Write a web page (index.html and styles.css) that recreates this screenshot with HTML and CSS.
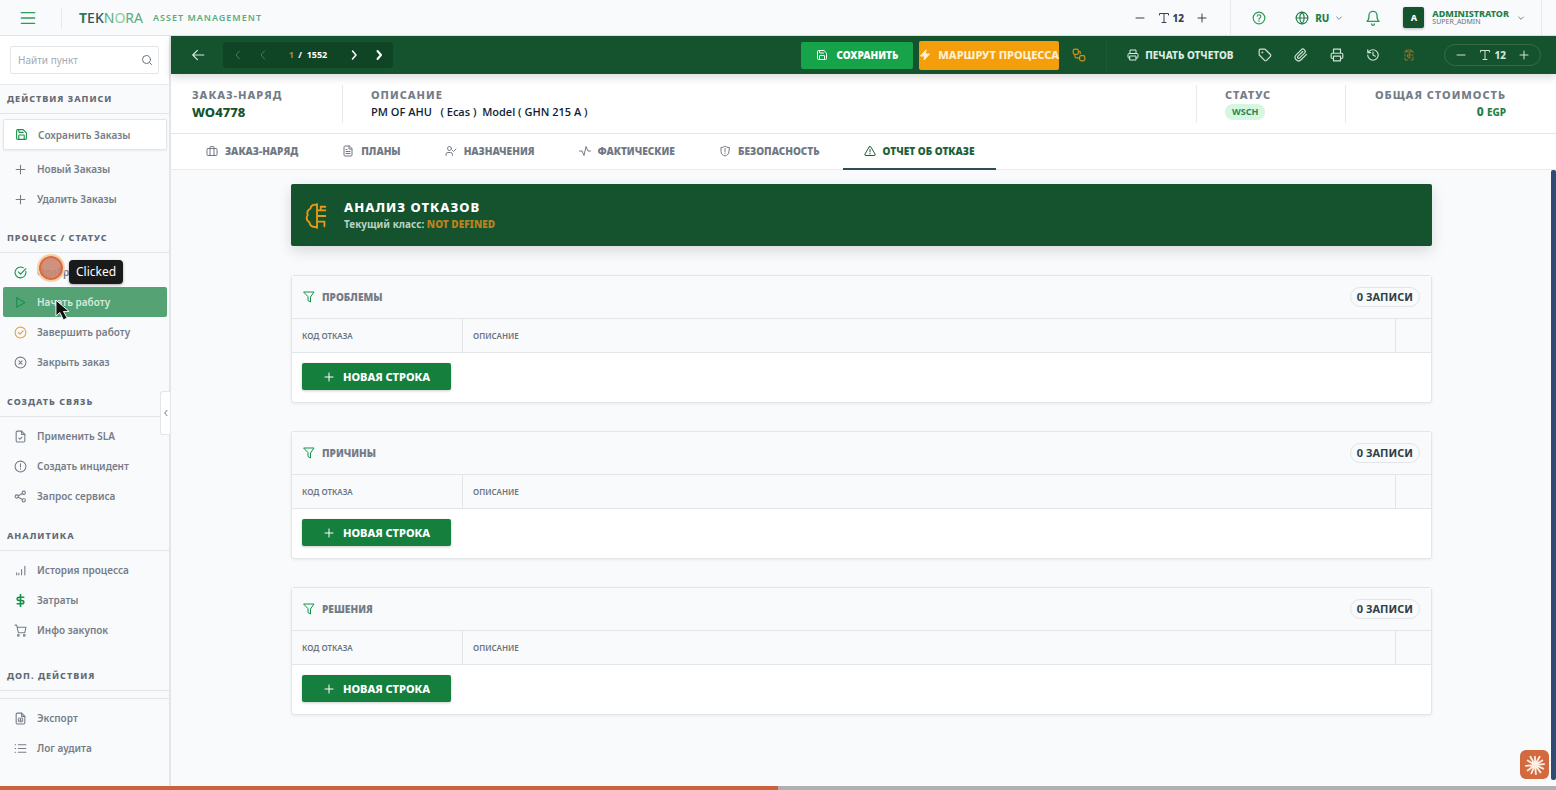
FILE: index.html
```html
<!DOCTYPE html>
<html lang="ru">
<head>
<meta charset="utf-8">
<meta name="viewport" content="width=device-width, initial-scale=1">
<title>TEKNORA Asset Management</title>
<link rel="stylesheet" href="styles.css">
</head>
<body>
<svg class="sprite" aria-hidden="true">
  <symbol id="i-menu" viewBox="0 0 24 24"><path d="M2 4h20M2 12h20M2 20h20"/></symbol>
  <symbol id="i-search" viewBox="0 0 24 24"><circle cx="11" cy="11" r="8"/><path d="m21 21-4-4"/></symbol>
  <symbol id="i-save" viewBox="0 0 24 24"><path d="M15 3H5a2 2 0 0 0-2 2v14a2 2 0 0 0 2 2h14a2 2 0 0 0 2-2V9z"/><path d="M17 21v-7a1 1 0 0 0-1-1H8a1 1 0 0 0-1 1v7M7 3v4a1 1 0 0 0 1 1h7"/></symbol>
  <symbol id="i-plus" viewBox="0 0 24 24"><path d="M4 12h16M12 4v16"/></symbol>
  <symbol id="i-minus" viewBox="0 0 24 24"><path d="M4 12h16"/></symbol>
  <symbol id="i-check" viewBox="0 0 24 24"><path d="M21.800 10A10 10 0 1 1 17 3.300"/><path d="m8 11 4 4L22 5"/></symbol>
  <symbol id="i-play" viewBox="0 0 24 24"><path d="m5 3 15 9-15 9z"/></symbol>
  <symbol id="i-done" viewBox="0 0 24 24"><circle cx="12" cy="12" r="10"/><path d="m8 12 3 3 6-6"/></symbol>
  <symbol id="i-close" viewBox="0 0 24 24"><circle cx="12" cy="12" r="10"/><path d="m15 9-6 6M9 9l6 6"/></symbol>
  <symbol id="i-filecheck" viewBox="0 0 24 24"><path d="M14 2H6a2 2 0 0 0-2 2v16a2 2 0 0 0 2 2h12a2 2 0 0 0 2-2V8z"/><path d="M14 2v6h6M9 15l2 2 4-4"/></symbol>
  <symbol id="i-alert" viewBox="0 0 24 24"><circle cx="12" cy="12" r="10"/><path d="M12 7v6M12 16v1"/></symbol>
  <symbol id="i-share" viewBox="0 0 24 24"><circle cx="18" cy="5" r="3"/><circle cx="5" cy="12" r="3"/><circle cx="18" cy="19" r="3"/><path d="m8 13.500 7.400 4M15.400 6.500 8 10.500"/></symbol>
  <symbol id="i-bars" viewBox="0 0 24 24"><path d="M5 20v-4M9 20v-3M14 20V10M20 20V4"/></symbol>
  <symbol id="i-dollar" viewBox="0 0 24 24"><path stroke-width="3" d="M12 1v22M18 6H9.500a3.500 3 0 0 0 0 6h5a3.500 3 0 0 1 0 6H6"/></symbol>
  <symbol id="i-cart" viewBox="0 0 24 24"><circle cx="8" cy="21" r="1.500"/><circle cx="19" cy="21" r="1.500"/><path d="M2 2h3l3 14h12l2-10H6"/></symbol>
  <symbol id="i-sheet" viewBox="0 0 24 24"><path d="M14 2H6a2 2 0 0 0-2 2v16a2 2 0 0 0 2 2h12a2 2 0 0 0 2-2V8z"/><path d="M14 2v6h6"/><path stroke-width="1.500" d="M8 12v6h8v-6zM12 12v6M8 15h8"/></symbol>
  <symbol id="i-list" viewBox="0 0 24 24"><path d="M8 5h14M8 12h14M8 19h14M2 5h1M2 12h1M2 19h1"/></symbol>
  <symbol id="i-type" viewBox="0 0 24 24"><path d="M3 6V3h18v3M12 3v18M8 21h8"/></symbol>
  <symbol id="i-help" viewBox="0 0 24 24"><circle cx="12" cy="12" r="10"/><path d="M9 9a3 3 0 0 1 6 1c0 2-3 2-3 4M12 17v1"/></symbol>
  <symbol id="i-globe" viewBox="0 0 24 24"><circle cx="12" cy="12" r="10"/><path d="M2 12h20M12 2a15 15 0 0 1 0 20a15 15 0 0 1 0-20"/></symbol>
  <symbol id="i-bell" viewBox="0 0 24 24"><path d="M6 8a6 6 0 0 1 12 0c0 7 3 9 3 9H3s3-2 3-9M10 21a2 2 0 0 0 4 0"/></symbol>
  <symbol id="i-down" viewBox="0 0 24 24"><path d="m5 9 7 7 7-7"/></symbol>
  <symbol id="i-left" viewBox="0 0 24 24"><path d="m15 4-7 8 7 8"/></symbol>
  <symbol id="i-right" viewBox="0 0 24 24"><path d="m9 4 7 8-7 8"/></symbol>
  <symbol id="i-back" viewBox="0 0 24 24"><path d="m11 4-8 8 8 8M3 12h19"/></symbol>
  <symbol id="i-bolt" viewBox="0 0 24 24"><path fill="currentColor" d="M14 2 3 14h8l-1 8 11-12h-8z"/></symbol>
  <symbol id="i-flow" viewBox="0 0 24 24"><rect x="2" y="2" width="9" height="9" rx="3"/><rect x="13" y="13" width="9" height="9" rx="3"/><path d="M5 11v3a3 3 0 0 0 3 3h5M11 6h3v4"/></symbol>
  <symbol id="i-print" viewBox="0 0 24 24"><path d="M6 18H4a2 2 0 0 1-2-2v-5a2 2 0 0 1 2-2h16a2 2 0 0 1 2 2v5a2 2 0 0 1-2 2h-2M6 9V2h12v7M6 14h12v8H6z"/></symbol>
  <symbol id="i-tag" viewBox="0 0 24 24"><path d="M12.600 2.600A2 2 0 0 0 11 2H4a2 2 0 0 0-2 2v7a2 2 0 0 0 .6 1.400l8.700 8.700a2.400 2.400 0 0 0 3.400 0l6.600-6.600a2.400 2.400 0 0 0 0-3.400z"/><circle cx="7.500" cy="7.500" r=".6"/></symbol>
  <symbol id="i-clip" viewBox="0 0 24 24"><path d="m21.400 11-9.200 9.200a6 6 0 0 1-8.500-8.500l8.600-8.600a4 4 0 1 1 5.700 5.700l-8.600 8.500a2 2 0 0 1-2.800-2.800l8.500-8.500"/></symbol>
  <symbol id="i-history" viewBox="0 0 24 24"><path d="M3 12a9 9 0 1 0 9-9 9.700 9.700 0 0 0-6.700 2.700L3 8M3 3v5h5M12 7v5l4 2"/></symbol>
  <symbol id="i-board" viewBox="0 0 24 24"><path d="M8 4H4v3M16 4h4v3M8 2h8v4H8zM4 11v3M4 18v4h5M20 16v6h-4M20 12H9M13 8v4M9 12v4h6M12 16v3"/></symbol>
  <symbol id="i-case" viewBox="0 0 24 24"><rect x="2" y="7" width="20" height="14" rx="2"/><path d="M8 21V5a2 2 0 0 1 2-2h4a2 2 0 0 1 2 2v16"/></symbol>
  <symbol id="i-file" viewBox="0 0 24 24"><path d="M14 2H6a2 2 0 0 0-2 2v16a2 2 0 0 0 2 2h12a2 2 0 0 0 2-2V8z"/><path d="M14 2v6h6M8 13h8M8 17h8M8 9h2"/></symbol>
  <symbol id="i-user" viewBox="0 0 24 24"><circle cx="9" cy="7" r="4"/><path d="M2 21v-2a4 4 0 0 1 4-4h5a4 4 0 0 1 4 4v2M15 11l2 2 5-5"/></symbol>
  <symbol id="i-pulse" viewBox="0 0 24 24"><path d="M1 12h5l4 9 4-18 4 9h5"/></symbol>
  <symbol id="i-shield" viewBox="0 0 24 24"><path d="M20 13c0 5-3.500 7.500-8 9-4.500-1.500-8-4-8-9V5c3 0 6-1 8-3 2 2 5 3 8 3zM12 7v6M12 16v1"/></symbol>
  <symbol id="i-warn" viewBox="0 0 24 24"><path d="M10.300 3.900 2 18a2 2 0 0 0 1.700 3h16.600a2 2 0 0 0 1.700-3L13.700 3.900a2 2 0 0 0-3.400 0zM12 9v5M12 17v1"/></symbol>
  <symbol id="i-filter" viewBox="0 0 24 24"><path d="M2 2h20l-7 10v10l-5-3v-7z"/></symbol>
  <symbol id="i-brain" viewBox="0 0 24 28"><path d="M12 1v26M12 3C9 0 5 3 5 6 2 7 1 10 2 13c-2 3-1 6 2 8 0 4 5 6 8 4M12 14h9M12 8h4V4h5M16 8h5M12 20h8v5"/></symbol>
</svg>

<div class="app">
  <header class="topbar">
    <button class="icon-btn menu" aria-label="Меню"><svg class="ic ic16"><use href="#i-menu"/></svg></button>
    <a class="brand" href="#">
      <span class="logo"><span class="logo-t">T</span><span class="logo-ek">EK</span><span class="logo-n">N</span><span class="logo-o">O</span><span class="logo-ra">RA</span></span>
      <span class="tagline">ASSET MANAGEMENT</span>
    </a>
    <div class="top-size">
      <button class="icon-btn" aria-label="Меньше"><svg class="ic ic12"><use href="#i-minus"/></svg></button>
      <span class="size-value"><svg class="ic ic12"><use href="#i-type"/></svg>12</span>
      <button class="icon-btn" aria-label="Больше"><svg class="ic ic12"><use href="#i-plus"/></svg></button>
    </div>
    <div class="top-tools">
      <button class="icon-btn green" aria-label="Помощь"><svg class="ic ic14"><use href="#i-help"/></svg></button>
      <button class="lang"><svg class="ic ic14"><use href="#i-globe"/></svg>RU<svg class="ic ic8 muted"><use href="#i-down"/></svg></button>
      <button class="icon-btn bell green" aria-label="Уведомления"><svg class="ic ic16"><use href="#i-bell"/></svg></button>
      <button class="user">
        <span class="avatar">A</span>
        <span class="user-text"><span class="user-name">ADMINISTRATOR</span><span class="user-role">SUPER_ADMIN</span></span>
        <svg class="ic ic8 muted"><use href="#i-down"/></svg>
      </button>
    </div>
  </header>

  <div class="body">
    <aside class="sidebar">
      <div class="search">
        <label class="search-box"><input type="text" placeholder="Найти пункт" aria-label="Найти пункт"><svg class="ic ic12"><use href="#i-search"/></svg></label>
      </div>
      <nav class="side-nav">
        <h2 class="side-title">ДЕЙСТВИЯ ЗАПИСИ</h2>
        <div class="side-group lead">
          <button class="side-item card"><svg class="ic c-green"><use href="#i-save"/></svg>Сохранить Заказы</button>
          <button class="side-item"><svg class="ic"><use href="#i-plus"/></svg>Новый Заказы</button>
          <button class="side-item"><svg class="ic"><use href="#i-plus"/></svg>Удалить Заказы</button>
        </div>
        <h2 class="side-title">ПРОЦЕСС / СТАТУС</h2>
        <div class="side-group">
          <button class="side-item"><svg class="ic c-green"><use href="#i-check"/></svg>Одобрить</button>
          <button class="side-item active"><svg class="ic c-green"><use href="#i-play"/></svg>Начать работу</button>
          <button class="side-item"><svg class="ic c-amber"><use href="#i-done"/></svg>Завершить работу</button>
          <button class="side-item"><svg class="ic"><use href="#i-close"/></svg>Закрыть заказ</button>
        </div>
        <h2 class="side-title">СОЗДАТЬ СВЯЗЬ</h2>
        <div class="side-group">
          <button class="side-item"><svg class="ic"><use href="#i-filecheck"/></svg>Применить SLA</button>
          <button class="side-item"><svg class="ic"><use href="#i-alert"/></svg>Создать инцидент</button>
          <button class="side-item"><svg class="ic"><use href="#i-share"/></svg>Запрос сервиса</button>
        </div>
        <h2 class="side-title">АНАЛИТИКА</h2>
        <div class="side-group wide">
          <button class="side-item"><svg class="ic"><use href="#i-bars"/></svg>История процесса</button>
          <button class="side-item"><svg class="ic c-green"><use href="#i-dollar"/></svg>Затраты</button>
          <button class="side-item"><svg class="ic"><use href="#i-cart"/></svg>Инфо закупок</button>
        </div>
        <h2 class="side-title">ДОП. ДЕЙСТВИЯ</h2>
        <div class="side-group ruled">
          <button class="side-item"><svg class="ic"><use href="#i-sheet"/></svg>Экспорт</button>
          <button class="side-item"><svg class="ic"><use href="#i-list"/></svg>Лог аудита</button>
        </div>
      </nav>
      <button class="collapse" aria-label="Свернуть"><svg class="ic ic8"><use href="#i-left"/></svg></button>
    </aside>

    <main class="main">
      <div class="toolbar">
        <button class="icon-btn back" aria-label="Назад"><svg class="ic ic14"><use href="#i-back"/></svg></button>
        <div class="pager">
          <button disabled aria-label="Первая"><svg class="ic ic12"><use href="#i-left"/></svg></button>
          <button disabled aria-label="Предыдущая"><svg class="ic ic12"><use href="#i-left"/></svg></button>
          <span class="pager-text"><span class="pager-now">1</span> / &nbsp;1552</span>
          <button aria-label="Следующая"><svg class="ic ic12 bold"><use href="#i-right"/></svg></button>
          <button aria-label="Последняя"><svg class="ic ic12 heavy"><use href="#i-right"/></svg></button>
        </div>
        <div class="actions">
          <button class="btn-save"><svg class="ic ic12"><use href="#i-save"/></svg>СОХРАНИТЬ</button>
          <button class="btn-route"><svg class="ic ic12"><use href="#i-bolt"/></svg>МАРШРУТ ПРОЦЕССА</button>
          <button class="icon-btn c-orange" aria-label="Схема"><svg class="ic ic14"><use href="#i-flow"/></svg></button>
        </div>
        <div class="prints">
          <button class="btn-print"><svg class="ic ic12"><use href="#i-print"/></svg>ПЕЧАТЬ ОТЧЕТОВ</button>
        </div>
        <div class="tool-icons">
          <button class="icon-btn" aria-label="Метка"><svg class="ic ic14"><use href="#i-tag"/></svg></button>
          <button class="icon-btn" aria-label="Вложения"><svg class="ic ic14"><use href="#i-clip"/></svg></button>
          <button class="icon-btn" aria-label="Печать"><svg class="ic ic14"><use href="#i-print"/></svg></button>
          <button class="icon-btn" aria-label="История"><svg class="ic ic14"><use href="#i-history"/></svg></button>
          <button class="icon-btn c-dim" aria-label="Журнал"><svg class="ic ic12"><use href="#i-board"/></svg></button>
        </div>
        <div class="size-pill">
          <button class="icon-btn" aria-label="Меньше"><svg class="ic ic12"><use href="#i-minus"/></svg></button>
          <span class="size-value"><svg class="ic ic12"><use href="#i-type"/></svg>12</span>
          <button class="icon-btn" aria-label="Больше"><svg class="ic ic12"><use href="#i-plus"/></svg></button>
        </div>
      </div>

      <section class="record">
        <div class="field order"><span class="label">ЗАКАЗ-НАРЯД</span><span class="value order-no">WO4778</span></div>
        <div class="field desc"><span class="label">ОПИСАНИЕ</span><span class="value">PM OF AHU &nbsp; ( Ecas ) &nbsp;Model ( GHN 215 A )</span></div>
        <div class="field status"><span class="label">СТАТУС</span><span class="badge">WSCH</span></div>
        <div class="field total"><span class="label">ОБЩАЯ СТОИМОСТЬ</span><span class="value money">0 <small>EGP</small></span></div>
      </section>

      <nav class="tabs">
        <button class="tab"><svg class="ic ic12"><use href="#i-case"/></svg>ЗАКАЗ-НАРЯД</button>
        <button class="tab"><svg class="ic ic12"><use href="#i-file"/></svg>ПЛАНЫ</button>
        <button class="tab"><svg class="ic ic12"><use href="#i-user"/></svg>НАЗНАЧЕНИЯ</button>
        <button class="tab"><svg class="ic ic12"><use href="#i-pulse"/></svg>ФАКТИЧЕСКИЕ</button>
        <button class="tab"><svg class="ic ic12"><use href="#i-shield"/></svg>БЕЗОПАСНОСТЬ</button>
        <button class="tab current"><svg class="ic ic12"><use href="#i-warn"/></svg>ОТЧЕТ ОБ ОТКАЗЕ</button>
      </nav>

      <div class="scroll">
        <div class="content">
          <section class="banner">
            <svg class="ic brain"><use href="#i-brain"/></svg>
            <div>
              <h1>АНАЛИЗ ОТКАЗОВ</h1>
              <p>Текущий класс: <span>NOT DEFINED</span></p>
            </div>
          </section>

          <section class="panel">
            <header><svg class="ic ic12 c-green"><use href="#i-filter"/></svg><h2>ПРОБЛЕМЫ</h2><span class="count">0 ЗАПИСИ</span></header>
            <table>
              <thead><tr><th class="col-code">КОД ОТКАЗА</th><th>ОПИСАНИЕ</th><th class="col-end"></th></tr></thead>
              <tbody><tr><td colspan="3"><button class="btn-new"><svg class="ic ic12"><use href="#i-plus"/></svg>НОВАЯ СТРОКА</button></td></tr></tbody>
            </table>
          </section>

          <section class="panel">
            <header><svg class="ic ic12 c-green"><use href="#i-filter"/></svg><h2>ПРИЧИНЫ</h2><span class="count">0 ЗАПИСИ</span></header>
            <table>
              <thead><tr><th class="col-code">КОД ОТКАЗА</th><th>ОПИСАНИЕ</th><th class="col-end"></th></tr></thead>
              <tbody><tr><td colspan="3"><button class="btn-new"><svg class="ic ic12"><use href="#i-plus"/></svg>НОВАЯ СТРОКА</button></td></tr></tbody>
            </table>
          </section>

          <section class="panel">
            <header><svg class="ic ic12 c-green"><use href="#i-filter"/></svg><h2>РЕШЕНИЯ</h2><span class="count">0 ЗАПИСИ</span></header>
            <table>
              <thead><tr><th class="col-code">КОД ОТКАЗА</th><th>ОПИСАНИЕ</th><th class="col-end"></th></tr></thead>
              <tbody><tr><td colspan="3"><button class="btn-new"><svg class="ic ic12"><use href="#i-plus"/></svg>НОВАЯ СТРОКА</button></td></tr></tbody>
            </table>
          </section>
        </div>
        <div class="scroll-thumb"></div>
      </div>
    </main>
  </div>
  <div class="progress"><div class="progress-fill" style="width:50%"></div></div>
</div>

<div class="click-dot"></div>
<div class="click-tip">Clicked</div>
<svg class="cursor" viewBox="0 0 16 24"><path d="M1 1v17l4-4 4 8 4-2-4-7h6z"/></svg>
<div class="assistant">
  <svg viewBox="0 0 24 24"><path d="M12 12V3M12 12l5-9M12 12l8-5M12 12l10-1M12 12l9 4M12 12l6 8M12 12l1 10M12 12l-4 9M12 12l-8 6M12 12l-10 1M12 12 4 7M12 12 7 3"/></svg>
</div>
</body>
</html>
```
FILE: styles.css
```css
* { box-sizing: border-box; }
body {
  margin: 0;
  font-family: "Noto Sans", "Open Sans", sans-serif;
  font-size: 11px;
  line-height: 16px;
  color: #6b7280;
  background: #f8fafc;
  overflow: hidden;
}
h1, h2, p { margin: 0; }
button {
  font: inherit;
  color: inherit;
  background: none;
  border: 0;
  padding: 0;
  cursor: pointer;
}
a { text-decoration: none; }
.sprite { position: absolute; width: 0; height: 0; }
.ic {
  flex: none;
  fill: none;
  stroke: currentColor;
  stroke-width: 2;
  stroke-linecap: round;
  stroke-linejoin: round;
}
.ic8 { width: 8px; height: 8px; stroke-width: 3; }
.ic12 { width: 12px; height: 12px; }
.ic14 { width: 14px; height: 14px; }
.ic16 { width: 16px; height: 16px; }
.bold { stroke-width: 3; }
.heavy { stroke-width: 4; }
.muted { color: #7c8591; }
.c-green { color: #15914a; }
.c-amber { color: #e5a04a; }
.icon-btn {
  display: flex;
  align-items: center;
  justify-content: center;
  width: 24px;
  height: 24px;
}
.green { color: #2c9a58; }

/* Top bar */
.app { display: flex; flex-direction: column; height: 100vh; }
.topbar {
  display: flex;
  align-items: center;
  height: 36px;
  flex: none;
  padding: 0 14px 0 16px;
  border-bottom: 1px solid #dfe3e6;
}
.menu { color: #2c9a58; }
.brand {
  display: flex;
  align-items: center;
  gap: 10px;
  margin-left: 21px;
  padding-left: 17px;
  height: 22px;
  border-left: 1px solid #e8ebee;
}
.logo { font-size: 14px; font-weight: 400; color: #5cab7c; }
.logo-t { font-weight: 700; color: #2f7d55; }
.logo-ek { font-weight: 500; color: #33535a; }
.logo-o { color: #86cf9f; }
.tagline { font-size: 9px; font-weight: 600; letter-spacing: 1px; color: #5cab7c; }
.top-size {
  display: flex;
  align-items: center;
  gap: 6px;
  margin-left: auto;
  padding-right: 16px;
  color: #374151;
}
.size-value { display: flex; align-items: center; gap: 3px; font-size: 10px; font-weight: 800; }
.top-tools {
  display: flex;
  align-items: center;
  gap: 20px;
  height: 35px;
  padding: 0 16px;
  border-left: 1px solid #e8ebee;
  border-right: 1px solid #e8ebee;
}
.lang { display: flex; align-items: center; gap: 6px; margin-left: 4px; font-size: 10px; font-weight: 800; color: #23804a; }
.bell { width: 20px; }
.user { display: flex; align-items: center; gap: 8px; }
.avatar {
  display: grid;
  place-items: center;
  width: 21px;
  height: 21px;
  border-radius: 2px;
  background: #14532d;
  color: #fff;
  font-size: 9px;
  font-weight: 800;
  box-shadow: 0 1px 3px #0004;
}
.user-text { display: flex; flex-direction: column; align-items: flex-start; }
.user-name { font-size: 9px; line-height: 8px; font-weight: 800; color: #238049; }
.user-role { font-size: 7px; line-height: 7px; }

/* Sidebar */
.body { display: flex; flex: 1; min-height: 0; }
.sidebar {
  position: relative;
  width: 171px;
  flex: none;
  border-right: 2px solid #e3e6e9;
}
.search { padding: 10px; background: #fff; border-bottom: 1px solid #e8ebee; }
.search-box {
  display: flex;
  align-items: center;
  height: 28px;
  padding: 0 5px 0 7px;
  border: 1px solid #e3e6e9;
  border-radius: 2px;
}
.search-box input {
  flex: 1;
  min-width: 0;
  border: 0;
  outline: 0;
  padding: 0;
  font: inherit;
  font-size: 10px;
  background: none;
}
.search-box input::placeholder { color: #a3a9b3; }
.side-title {
  height: 29px;
  padding: 6px 7px;
  font-size: 9px;
  line-height: 16px;
  font-weight: 800;
  letter-spacing: 1px;
  color: #626b76;
  border-bottom: 1px solid #e3e6e9;
}
.side-group { padding: 4px 2px 11px 3px; }
.side-group.lead { padding-bottom: 10px; }
.side-group.wide { padding-bottom: 17px; }
.side-group.ruled { margin-top: 7px; border-top: 1px solid #e3e6e9; }
.side-item {
  display: flex;
  align-items: center;
  gap: 10px;
  width: 100%;
  height: 30px;
  padding: 0 11px;
  font-size: 10px;
  font-weight: 600;
  color: #767d88;
  border-radius: 2px;
  white-space: nowrap;
}
.side-item .ic { width: 13px; height: 13px; }
.side-item.card {
  height: 31px;
  margin: 1px 0 4px;
  background: #fff;
  border: 1px solid #e3e6e9;
  box-shadow: 0 1px 2px #0001;
}
.side-item.active { background: #55a374; color: #d3eadc; }
.collapse {
  position: absolute;
  right: -1px;
  top: 355px;
  display: grid;
  place-items: center;
  width: 10px;
  height: 44px;
  background: #fff;
  border: 1px solid #e3e6e9;
  border-right: 0;
  border-radius: 3px 0 0 3px;
}

/* Toolbar */
.main { display: flex; flex-direction: column; flex: 1; min-width: 0; }
.toolbar {
  position: relative;
  z-index: 1;
  display: flex;
  align-items: center;
  height: 38px;
  flex: none;
  padding: 0 15px;
  background: #14532d;
  color: #cfe3d6;
  box-shadow: 0 4px 8px #0002;
}
.back { color: #d8e8de; }
.pager {
  display: flex;
  align-items: center;
  height: 26px;
  margin-left: 13px;
  padding: 0 2px;
  border-radius: 4px;
  background: #0f4525;
  color: #fff;
}
.pager button { display: grid; place-items: center; width: 25px; height: 24px; }
.pager button:disabled { color: #4d7a5e; }
.pager-text {
  min-width: 66px;
  text-align: center;
  font-size: 9px;
  font-weight: 700;
}
.pager-now { margin-right: 2px; color: #b5892a; }
.actions { display: flex; align-items: center; gap: 6px; margin-left: auto; padding-right: 15px; border-right: 1px solid #1d5a37; }
.btn-save, .btn-route, .btn-print { display: flex; align-items: center; gap: 7px; font-weight: 800; color: #fff; white-space: nowrap; }
.btn-save { height: 27px; gap: 8px; padding: 0 15px; background: #16a34a; border-radius: 2px; font-size: 10px; font-weight: 900; }
.btn-route { height: 29px; padding: 0; background: #f59e0b; border-radius: 2px; color: #fdf0d3; }
.c-orange { margin-left: 2px; color: #d0931f; }
.prints { padding: 0 20px; }
.btn-print { gap: 6px; font-size: 10px; color: #dcebe2; }
.tool-icons { display: flex; gap: 12px; }
.c-dim { color: #8f7424; }
.size-pill {
  display: flex;
  align-items: center;
  gap: 6px;
  height: 22px;
  margin-left: 23px;
  padding: 0 4px;
  border: 1px solid #356b49;
  border-radius: 11px;
}

/* Record summary */
.record {
  display: flex;
  align-items: center;
  height: 60px;
  flex: none;
  padding: 0 50px 0 21px;
  background: #fff;
  border-bottom: 1px solid #e3e6e9;
}
.field {
  display: flex;
  flex-direction: column;
  align-items: flex-start;
  gap: 1px;
  height: 38px;
  padding: 2px 0;
}
.label { font-size: 11px; font-weight: 800; letter-spacing: 1px; color: #747c87; }
.value { font-size: 11px; font-family: "Open Sans", sans-serif; font-weight: 600; color: #111f35; }
.order { width: 151px; border-right: 1px solid #e8ebee; }
.desc { flex: 1; padding-left: 28px; }
.status { width: 150px; padding-left: 28px; border-left: 1px solid #e8ebee; border-right: 1px solid #e8ebee; }
.total { width: 160px; align-items: flex-end; }
.value.order-no { font-family: "Noto Sans", sans-serif; font-size: 13px; font-weight: 800; color: #14532d; }
.value.money { font-family: "Noto Sans", sans-serif; font-size: 12px; font-weight: 800; color: #23804a; }
.money small { font-size: 10px; }
.badge {
  padding: 0 7px;
  border-radius: 8px;
  background: #d5f6e1;
  color: #27874f;
  font-size: 9px;
  font-weight: 700;
}

/* Tabs */
.tabs { display: flex; gap: 2px; height: 36px; flex: none; padding-left: 14px; background: #fff; border-bottom: 1px solid #e8ebee; }
.tab {
  display: flex;
  align-items: center;
  gap: 7px;
  height: 36px;
  padding: 0 21px;
  font-size: 10px;
  font-weight: 900;
  color: #717984;
  border-bottom: 2px solid transparent;
  white-space: nowrap;
}
.tab.current { color: #1b6138; border-bottom-color: #2f4b5c; }

/* Content */
.scroll { display: flex; flex: 1; min-height: 0; }
.scroll-thumb { width: 5px; flex: none; margin-bottom: 6px; background: #2f4a75; border-radius: 2px; }
.content {
  flex: 1;
  display: flex;
  flex-direction: column;
  gap: 28px;
  padding: 14px 119px 28px 120px;
  min-width: 0;
}
.banner {
  display: flex;
  align-items: center;
  gap: 15px;
  height: 62px;
  padding: 1px 14px 0;
  margin-bottom: 1px;
  border-radius: 2px;
  background: #14532d;
  box-shadow: 0 5px 14px #0002;
}
.brain { width: 24px; height: 26px; color: #e69a17; }
.banner h1 { font-size: 13px; line-height: 17px; font-weight: 800; letter-spacing: 1px; color: #fff; }
.banner p { font-size: 10px; line-height: 16px; font-weight: 700; color: #b9d3c3; }
.banner p span { font-weight: 900; color: #b98120; }
.panel {
  background: #fff;
  border: 1px solid #e3e6e9;
  border-radius: 3px;
  box-shadow: 0 1px 3px #0001;
}
.panel header {
  display: flex;
  align-items: center;
  gap: 7px;
  height: 43px;
  padding: 0 11px;
  background: #f8fafc;
  border-bottom: 1px solid #e3e6e9;
}
.panel h2 { font-size: 10px; line-height: 16px; font-weight: 900; color: #747c87; }
.count {
  margin-left: auto;
  padding: 1px 6px;
  border: 1px solid #e3e6e9;
  border-radius: 10px;
  font-weight: 700;
  color: #2f3f46;
}
table { width: 100%; border-collapse: separate; border-spacing: 0; table-layout: fixed; }
th {
  height: 34px;
  padding: 0 11px 0 10px;
  text-align: left;
  font-size: 8px;
  font-weight: 600;
  background: #f8fafc;
  border-bottom: 1px solid #e3e6e9;
  border-right: 1px solid #e3e6e9;
}
th:last-child { border-right: 0; }
.col-code { width: 171px; }
.col-end { width: 35px; }
td { padding: 10px 10px 12px; }
.btn-new {
  display: flex;
  align-items: center;
  gap: 8px;
  height: 27px;
  padding: 0 21px;
  border-radius: 2px;
  background: #15803d;
  color: #fff;
  font-weight: 800;
  box-shadow: 0 1px 3px #0003;
}

/* Overlays */
.progress { height: 4px; flex: none; background: #b0b0b0; }
.progress-fill { height: 4px; background: #c9623f; }
.click-dot {
  position: absolute;
  left: 39px;
  top: 256px;
  width: 24px;
  height: 24px;
  border-radius: 50%;
  border: 2px solid #dc6a3c;
  background: #c98671e6;
  box-shadow: 0 0 0 2px #f3d2a8;
}
.click-tip {
  position: absolute;
  left: 69px;
  top: 260px;
  padding: 4px 7px;
  border-radius: 4px;
  background: #1a1a1a;
  color: #fff;
  font-size: 12px;
  line-height: 16px;
  box-shadow: 0 1px 3px #0005;
}
.cursor {
  position: absolute;
  left: 55px;
  top: 299px;
  width: 15px;
  height: 23px;
  fill: #111;
  stroke: #fff;
  stroke-width: 1;
}
.assistant {
  position: absolute;
  right: 7px;
  bottom: 11px;
  display: grid;
  place-items: center;
  width: 29px;
  height: 29px;
  border-radius: 6px;
  background: #d2693f;
}
.assistant svg { width: 22px; height: 22px; stroke: #fdeee4; stroke-width: 2; stroke-linecap: round; }
```
